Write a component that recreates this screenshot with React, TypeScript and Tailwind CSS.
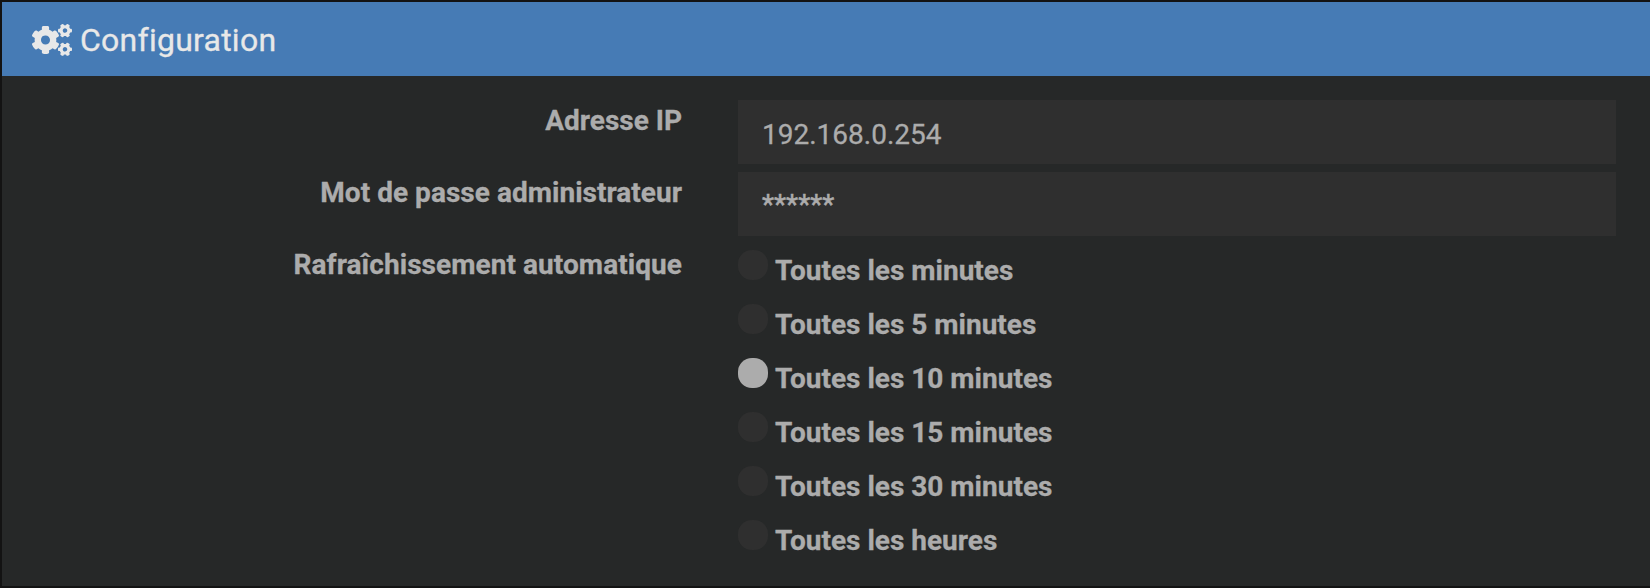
import React from 'react';
import { FaCogs } from 'react-icons/fa';

const options = [
  'Toutes les minutes',
  'Toutes les 5 minutes',
  'Toutes les 10 minutes',
  'Toutes les 15 minutes',
  'Toutes les 30 minutes',
  'Toutes les heures',
];

export default function App() {
  return (
    <div className="h-[588px] w-full overflow-hidden border-y-2 border-l-2 border-[#131313] bg-[#262828] font-[Roboto,sans-serif] text-[28px] leading-10 text-[#acacac] [-webkit-text-stroke:0.3px_currentColor]">
      <header className="flex h-[74px] items-center gap-2 bg-[#467bb5] pl-[30px] text-[32px] text-[#e8e8e8]">
        <FaCogs className="mt-0.5 size-10" />
        <h1 className="pt-0.5 tracking-[0.25px] [font-variant-ligatures:none]">Configuration</h1>
      </header>
      <main className="grid grid-cols-[680px_878px] gap-x-[56px] pt-6">
        <div className="h-[72px] pt-px text-right font-bold">Adresse IP</div>
        <div className="flex h-16 items-center bg-[#2f2f2f] pl-6 pt-[5px]">192.168.0.254</div>
        <div className="h-[72px] pt-px text-right font-bold tracking-[0.03px]">Mot de passe administrateur</div>
        <div className="flex h-16 items-center bg-[#2f2f2f] pl-6 pt-0.5 [-webkit-text-stroke:0.5px_currentColor]">******</div>
        <div className="pt-px text-right font-bold tracking-[0.06px]">Rafraîchissement automatique</div>
        <div>
          {options.map((o, i) => (
            <div key={o} className="flex h-[54px] gap-[7px] font-bold">
              <span className={i === 2 ? 'mt-1.5 size-[30px] rounded-[14px] bg-[#acacac]' : 'mt-1.5 size-[30px] rounded-[14px] bg-[#2f2f2f]'} />
              <span className="pt-[7px]">{o}</span>
            </div>
          ))}
        </div>
      </main>
    </div>
  );
}
